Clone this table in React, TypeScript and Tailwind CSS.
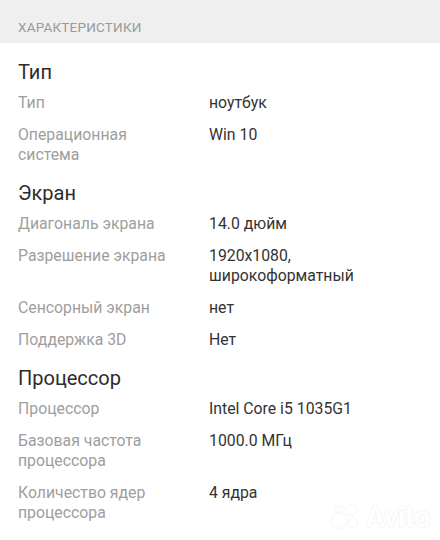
import React from "react";

type Row = { label: string[]; value: string[] };
type Section = { title: string; rows: Row[] };

const sections: Section[] = [
  {
    title: "Тип",
    rows: [
      { label: ["Тип"], value: ["ноутбук"] },
      { label: ["Операционная", "система"], value: ["Win 10"] },
    ],
  },
  {
    title: "Экран",
    rows: [
      { label: ["Диагональ экрана"], value: ["14.0 дюйм"] },
      { label: ["Разрешение экрана"], value: ["1920x1080,", "широкоформатный"] },
      { label: ["Сенсорный экран"], value: ["нет"] },
      { label: ["Поддержка 3D"], value: ["Нет"] },
    ],
  },
  {
    title: "Процессор",
    rows: [
      { label: ["Процессор"], value: ["Intel Core i5 1035G1"] },
      { label: ["Базовая частота", "процессора"], value: ["1000.0 МГц"] },
      { label: ["Количество ядер", "процессора"], value: ["4 ядра"] },
    ],
  },
];

function AvitoMark() {
  return (
    <div className="absolute right-[10px] bottom-[8px] flex items-center gap-1 text-white [filter:drop-shadow(0_0_1px_rgba(0,0,0,0.1))]">
      <svg width="30" height="26" viewBox="0 0 30 26" fill="white">
        <circle cx="8" cy="17" r="7" />
        <circle cx="20" cy="6" r="5" />
        <circle cx="22" cy="19" r="4" />
        <circle cx="8" cy="5" r="3" />
      </svg>
      <span className="text-[30px] leading-none font-medium tracking-tight">Avito</span>
    </div>
  );
}

export default function App() {
  return (
    <div className="relative w-[440px] h-[540px] overflow-hidden bg-white font-['Roboto',sans-serif]">
      <div className="h-[43px] bg-[#efefef] px-[18px] flex items-center">
        <span className="text-[13.5px] text-[#9a9a9a] tracking-[0.2px] pt-[11px]">ХАРАКТЕРИСТИКИ</span>
      </div>
      <div className="px-[18px] pt-[15px]">
        {sections.map((s, i) => (
          <div key={s.title} className={i > 0 ? "mt-[14px]" : ""}>
            <div className="text-[20px] leading-[28px] text-[#2c2c2c]">{s.title}</div>
            <div className="mt-[7px] flex flex-col gap-[12px]">
              {s.rows.map((r) => (
                <div key={r.label.join(" ")} className="flex text-[15.8px] leading-[20px]">
                  <div className="w-[191px] text-[#9e9e9e]">
                    {r.label.map((l) => (
                      <div key={l}>{l}</div>
                    ))}
                  </div>
                  <div className="text-[#333333]">
                    {r.value.map((v) => (
                      <div key={v}>{v}</div>
                    ))}
                  </div>
                </div>
              ))}
            </div>
          </div>
        ))}
      </div>
      <AvitoMark />
    </div>
  );
}
